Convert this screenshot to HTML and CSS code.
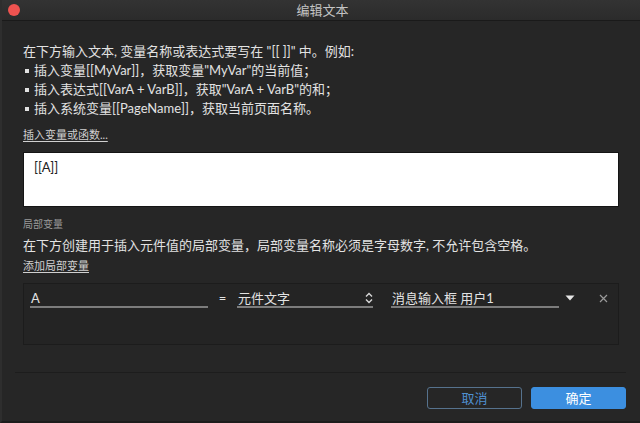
FILE: index.html
```html
<!DOCTYPE html>
<html lang="zh">
<head>
<meta charset="utf-8">
<title>编辑文本</title>
<link rel="stylesheet" href="styles.css">
</head>
<body>
<div class="window">
  <div class="titlebar">
    <span class="close-dot"></span>
    <span class="title">编辑文本</span>
    <span></span>
  </div>
  <div class="content">
    <div class="intro">
      <div>在下方输入文本, 变量名称或表达式要写在 "[[ ]]" 中。例如:</div>
      <div><span class="bullet"></span>插入变量[[MyVar]]，获取变量"MyVar"的当前值；</div>
      <div><span class="bullet"></span>插入表达式[[VarA + VarB]]，获取"VarA + VarB"的和；</div>
      <div><span class="bullet"></span>插入系统变量[[PageName]]，获取当前页面名称。</div>
    </div>
    <div class="link link-insert">插入变量或函数...</div>
    <div class="textbox">[[A]]</div>
    <div class="section-label">局部变量</div>
    <div class="desc">在下方创建用于插入元件值的局部变量，局部变量名称必须是字母数字, 不允许包含空格。</div>
    <div class="link link-add">添加局部变量</div>
    <div class="vars-panel">
      <div class="var-row">
        <div class="field field-name">A</div>
        <div class="equals">=</div>
        <div class="field field-type">
          <span>元件文字</span>
          <svg class="chevrons" width="8" height="12" viewBox="0 0 8 12"><path d="M1 4.5 L4 1.5 L7 4.5 M1 7.5 L4 10.5 L7 7.5" fill="none" stroke="#d8d8d8" stroke-width="1.4"/></svg>
        </div>
        <div class="field field-target">消息输入框 用户1</div>
        <div class="dropdown"><svg width="10" height="6" viewBox="0 0 10 6"><path d="M0.5 0.5 L9.5 0.5 L5 5.5 Z" fill="#e6e6e6"/></svg></div>
        <div class="remove"><svg width="9" height="9" viewBox="0 0 9 9"><path d="M1 1 L8 8 M8 1 L1 8" stroke="#9a9a9a" stroke-width="1.2"/></svg></div>
      </div>
    </div>
  </div>
  <div class="footer">
    <button class="btn btn-cancel">取消</button>
    <button class="btn btn-ok">确定</button>
  </div>
</div>
</body>
</html>
```

FILE: styles.css
```css
* { box-sizing: border-box; }
html, body {
  margin: 0;
  padding: 0;
  width: 640px;
  height: 423px;
  background: #262626;
  overflow: hidden;
  font-family: "Lato", "Noto Sans CJK SC", sans-serif;
}
.window {
  width: 640px;
  height: 423px;
  background: #262626;
  display: flex;
  flex-direction: column;
  border-left: 2px solid #2e2e2e;
  border-bottom: 2px solid #1c1c1c;
}
.titlebar {
  height: 21px;
  flex: none;
  display: grid;
  grid-template-columns: 1fr auto 1fr;
  align-items: center;
  background: linear-gradient(#333333, #2b2b2b);
  border-bottom: 1px solid #1a1a1a;
  padding-left: 3px;
}
.close-dot {
  width: 12px;
  height: 12px;
  border-radius: 50%;
  background: #ef5350;
  justify-self: start;
  margin-left: 3px;
}
.title {
  color: #c4c4c4;
  font-size: 13px;
  line-height: 20px;
  font-family: "Noto Sans CJK SC", sans-serif;
}
.content {
  padding: 21px 21px 0 21px;
  color: #e2e2e2;
  display: flex;
  flex-direction: column;
}
.intro {
  font-size: 13px;
  line-height: 19px;
}
.bullet {
  display: inline-block;
  width: 4px;
  height: 4px;
  background: #e2e2e2;
  margin: 0 5px 2px 2px;
  vertical-align: middle;
}
.link {
  font-size: 11px;
  line-height: 14px;
  color: #d0d0d0;
  text-decoration: underline;
  text-underline-offset: 2px;
}
.link-insert { margin-top: 10px; }
.textbox {
  margin-top: 10px;
  height: 55px;
  background: #ffffff;
  border: 1px solid #141414;
  color: #222;
  font-size: 13px;
  line-height: 16px;
  padding: 6px 10px;
}
.section-label {
  margin-top: 11px;
  font-size: 10px;
  line-height: 12px;
  color: #9a9a9a;
}
.desc {
  margin-top: 6px;
  font-size: 13px;
  line-height: 19px;
}
.link-add { margin-top: 4px; }
.vars-panel {
  margin-top: 10px;
  height: 62px;
  border: 1px solid #1c1c1c;
  background: #242424;
  padding: 6px 0 0 6px;
}
.var-row {
  display: flex;
  align-items: flex-start;
  font-size: 13px;
  color: #e2e2e2;
}
.field {
  height: 18px;
  line-height: 16px;
  border-bottom: 2px solid #7c7c7c;
  padding-left: 1px;
  white-space: nowrap;
}
.field-name { width: 178px; }
.equals {
  width: 29px;
  text-align: center;
  line-height: 16px;
}
.field-type {
  width: 136px;
  display: flex;
  justify-content: space-between;
  align-items: center;
}
.chevrons { margin-right: 0; }
.field-target {
  width: 168px;
  margin-left: 18px;
}
.dropdown {
  width: 22px;
  height: 16px;
  display: flex;
  align-items: center;
  justify-content: center;
}
.remove {
  width: 14px;
  height: 16px;
  margin-left: 15px;
  display: flex;
  align-items: center;
  justify-content: center;
}
.footer {
  margin: 27px 14px 0 13px;
  border-top: 1px solid #1d1d1d;
  padding-top: 14px;
  display: flex;
  justify-content: flex-end;
  gap: 9px;
}
.btn {
  width: 95px;
  height: 22px;
  border-radius: 3px;
  font-family: "Noto Sans CJK SC", sans-serif;
  font-size: 13px;
  line-height: 20px;
  padding: 0;
  cursor: pointer;
}
.btn-cancel {
  background: #262626;
  border: 1px solid #56728d;
  color: #4f8fd0;
}
.btn-ok {
  background: #3c8fe0;
  border: 1px solid #3c8fe0;
  color: #ffffff;
}
```
